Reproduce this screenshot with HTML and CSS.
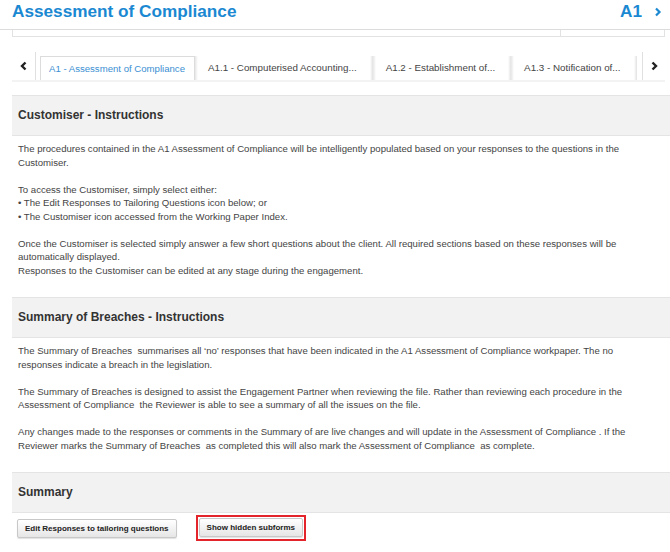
FILE: index.html
```html
<!DOCTYPE html>
<html lang="en">

<head>
    <meta charset="UTF-8">
    <meta name="viewport" content="width=device-width, initial-scale=1.0">
    <title>Assessment of Compliance</title>
    <link rel="stylesheet" href="styles.css">
</head>

<body>
    <div class="page-head">
        <h1 class="page-title">Assessment of Compliance</h1>
        <div class="page-code">
            <span>A1</span>
            <svg class="next-icon" width="8" height="10" viewBox="0 0 8 10">
                <polyline points="2,1.5 5.5,5 2,8.5" fill="none" stroke="#1b88d2" stroke-width="2.2" />
            </svg>
        </div>
    </div>
    <div class="head-strip">
        <div class="strip-left"></div>
        <div class="strip-right"></div>
    </div>

    <div class="tabs">
        <div class="tab-arrow tab-arrow-left">
            <svg width="8" height="10" viewBox="0 0 8 10">
                <polyline points="5.5,1.5 2,5 5.5,8.5" fill="none" stroke="#222" stroke-width="2.4" />
            </svg>
        </div>
        <div class="tab-list">
            <div class="tab active">A1 - Assessment of Compliance</div>
            <div class="tab">A1.1 - Computerised Accounting...</div>
            <div class="tab">A1.2 - Establishment of...</div>
            <div class="tab">A1.3 - Notification of...</div>
        </div>
        <div class="tab-arrow tab-arrow-right">
            <svg width="8" height="10" viewBox="0 0 8 10">
                <polyline points="2.5,1.5 6,5 2.5,8.5" fill="none" stroke="#222" stroke-width="2.4" />
            </svg>
        </div>
    </div>

    <div class="section">
        <h2 class="section-head">Customiser - Instructions</h2>
        <div class="section-body">
            The procedures contained in the A1 Assessment of Compliance will be intelligently populated based on your responses to the questions in the Customiser.<br><br>
            To access the Customiser, simply select either:<br>
            &bull; The Edit Responses to Tailoring Questions icon below; or<br>
            &bull; The Customiser icon accessed from the Working Paper Index.<br><br>
            Once the Customiser is selected simply answer a few short questions about the client. All required sections based on these responses will be automatically displayed.<br>
            Responses to the Customiser can be edited at any stage during the engagement.
        </div>
    </div>

    <div class="section">
        <h2 class="section-head">Summary of Breaches - Instructions</h2>
        <div class="section-body">
            The Summary of Breaches&nbsp; summarises all &lsquo;no&rsquo; responses that have been indicated in the A1 Assessment of Compliance workpaper. The no responses indicate a breach in the legislation.<br><br>
            The Summary of Breaches is designed to assist the Engagement Partner when reviewing the file. Rather than reviewing each procedure in the Assessment of Compliance&nbsp; the Reviewer is able to see a summary of all the issues on the file.<br><br>
            Any changes made to the responses or comments in the Summary of are live changes and will update in the Assessment of Compliance . If the Reviewer marks the Summary of Breaches&nbsp; as completed this will also mark the Assessment of Compliance&nbsp; as complete.
        </div>
    </div>

    <div class="section">
        <h2 class="section-head">Summary</h2>
        <div class="actions">
            <button class="btn">Edit Responses to tailoring questions</button>
            <span class="marked">
                <button class="btn">Show hidden subforms</button>
            </span>
        </div>
    </div>
</body>

</html>
```

FILE: styles.css
```css
body {
    font-family: "Liberation Sans", Arial, sans-serif;
    background-color: white;
    color: #444;
    margin: 0;
}

.page-head {
    display: flex;
    justify-content: space-between;
    align-items: center;
    height: 30px;
    padding: 0 8px 0 12px;
    border-bottom: 1px solid #dcdcdc;
    box-sizing: border-box;
}

.page-title {
    margin: 0;
    font-size: 17.2px;
    font-weight: bold;
    color: #1b88d2;
    padding-bottom: 6px;
}

.page-code {
    display: flex;
    align-items: center;
    gap: 12px;
    font-size: 17.2px;
    font-weight: bold;
    color: #1b88d2;
    padding-bottom: 6px;
}

.head-strip {
    display: flex;
    height: 6px;
    margin: 0 5px 0 12px;
    border: 1px solid #e2e2e2;
    border-top: none;
}

.strip-left {
    width: 547px;
    border-right: 1px solid #e2e2e2;
}

.tabs {
    display: flex;
    height: 28px;
    margin: 15px 5px 0 12px;
    border-bottom: 2px solid #f3f3f3;
}

.tab-arrow {
    display: flex;
    align-items: center;
    justify-content: center;
}

.tab-arrow-left {
    width: 23px;
    border-right: 1px solid #e0e0e0;
}

.tab-arrow-right {
    width: 22px;
    margin-left: auto;
    border-left: 1px solid #e0e0e0;
}

.tab-list {
    display: flex;
    align-items: flex-end;
    padding-left: 4px;
}

.tab {
    height: 24px;
    line-height: 24px;
    font-size: 9.8px;
    color: #444;
    padding: 0 16px 0 13px;
    white-space: nowrap;
    background: linear-gradient(to right, #e6e6e6, #fff 3px, #fff calc(100% - 3px), #e2e2e2);
}

.tab.active {
    color: #3b8fd3;
    background: white;
    padding: 0 9px 0 8px;
    border: 1px solid #dcdcdc;
    border-bottom: none;
    height: 23px;
    font-size: 9.6px;
}

.section-head {
    margin: 0;
    height: 39px;
    line-height: 39px;
    margin-left: 12px;
    padding-left: 6px;
    font-size: 12px;
    font-weight: bold;
    color: #333;
    background-color: #f2f2f2;
    border-top: 1px solid #e4e4e4;
    border-bottom: 1px solid #e4e4e4;
}

.tabs + .section .section-head {
    margin-top: 13px;
}

.section-body {
    margin-left: 12px;
    padding: 6px 20px 20px 6px;
    font-size: 9.6px;
    line-height: 13.5px;
    color: #444;
}

.actions {
    display: flex;
    align-items: center;
    gap: 19px;
    margin: 2px 0 0 17px;
}

.btn {
    font-family: "Liberation Sans", Arial, sans-serif;
    font-size: 8px;
    font-weight: bold;
    color: #222;
    height: 19px;
    padding: 0 7px;
    border: 1px solid #c8c8c8;
    border-radius: 2px;
    background: linear-gradient(#ffffff, #e6e6e6);
    box-shadow: 0 1px 1px rgba(0, 0, 0, 0.12);
    cursor: pointer;
}

.marked {
    display: flex;
    padding: 1px 1px 2px 1px;
    border: 2px solid #e3242b;
}
```
